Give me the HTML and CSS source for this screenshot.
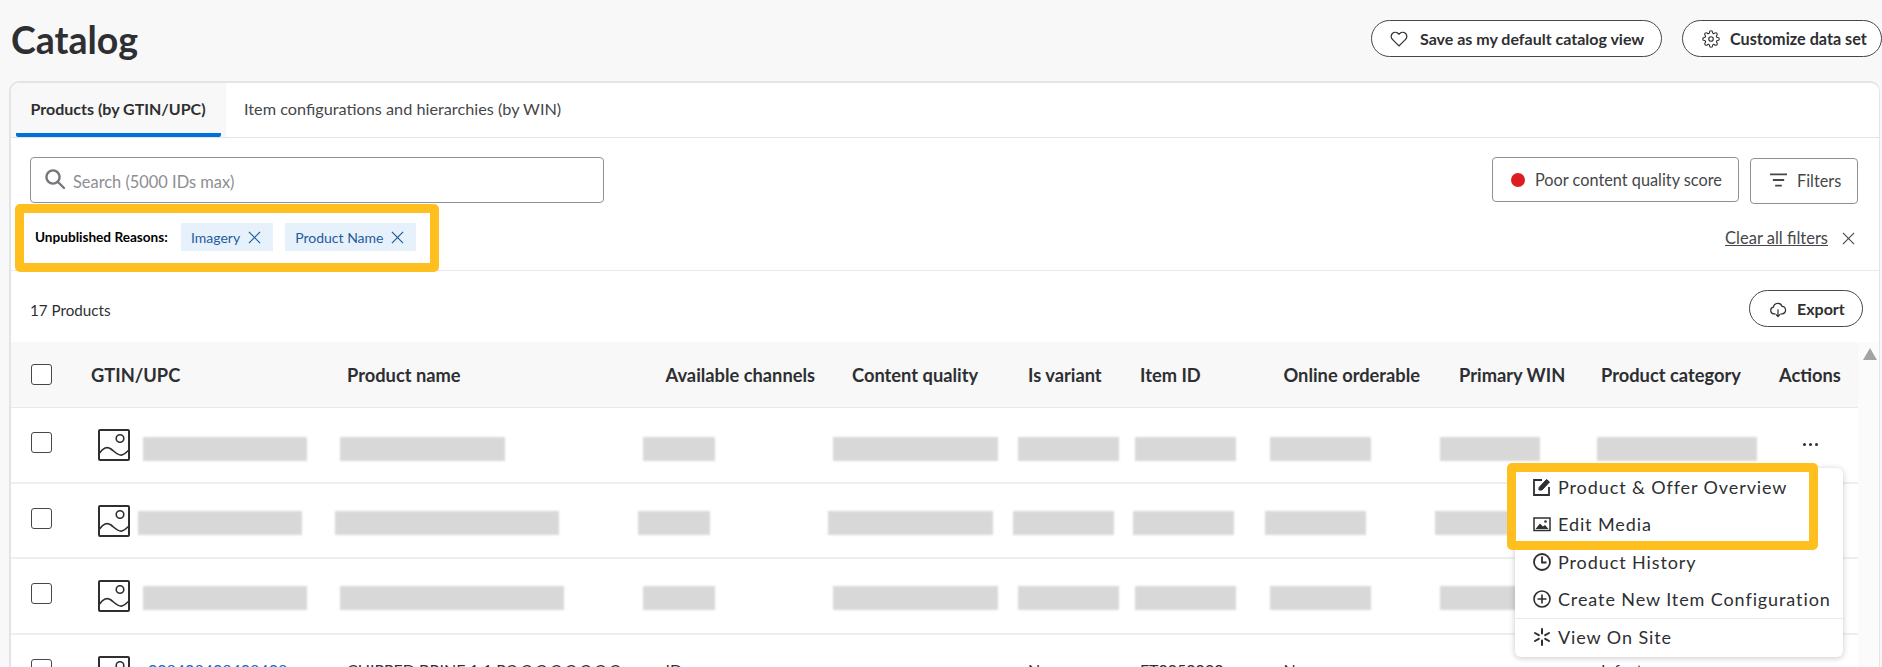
FILE: index.html
```html
<!DOCTYPE html>
<html lang="en">
<head>
<meta charset="utf-8">
<title>Catalog</title>
<link rel="stylesheet" href="styles.css">
</head>
<body>
<header class="topbar">
  <h1 class="title">Catalog</h1>
  <div class="top-actions">
    <button class="pill pill-save">
      <svg class="ic18" viewBox="0 0 24 24" fill="none" stroke="#2e2f32" stroke-width="1.6"><path d="M20.84 4.61a5.5 5.5 0 0 0-7.78 0L12 5.67l-1.06-1.06a5.5 5.5 0 0 0-7.78 7.78l1.06 1.06L12 21.23l7.78-7.78 1.06-1.06a5.5 5.5 0 0 0 0-7.78z"/></svg>
      <span>Save as my default catalog view</span>
    </button>
    <button class="pill pill-custom">
      <svg class="ic18" viewBox="0 0 24 24" fill="none" stroke="#2e2f32" stroke-width="1.5"><circle cx="12" cy="12" r="3"/><path d="M19.4 15a1.65 1.65 0 0 0 .33 1.82l.06.06a2 2 0 0 1 0 2.83 2 2 0 0 1-2.83 0l-.06-.06a1.65 1.65 0 0 0-1.82-.33 1.65 1.65 0 0 0-1 1.51V21a2 2 0 0 1-2 2 2 2 0 0 1-2-2v-.09A1.65 1.65 0 0 0 9 19.4a1.65 1.65 0 0 0-1.82.33l-.06.06a2 2 0 0 1-2.83 0 2 2 0 0 1 0-2.83l.06-.06a1.65 1.65 0 0 0 .33-1.82 1.65 1.65 0 0 0-1.51-1H3a2 2 0 0 1-2-2 2 2 0 0 1 2-2h.09A1.65 1.65 0 0 0 4.6 9a1.65 1.65 0 0 0-.33-1.82l-.06-.06a2 2 0 0 1 0-2.83 2 2 0 0 1 2.83 0l.06.06a1.65 1.65 0 0 0 1.82.33H9a1.65 1.65 0 0 0 1-1.51V3a2 2 0 0 1 2-2 2 2 0 0 1 2 2v.09a1.65 1.65 0 0 0 1 1.51 1.65 1.65 0 0 0 1.82-.33l.06-.06a2 2 0 0 1 2.83 0 2 2 0 0 1 0 2.83l-.06.06a1.65 1.65 0 0 0-.33 1.82V9a1.65 1.65 0 0 0 1.51 1H21a2 2 0 0 1 2 2 2 2 0 0 1-2 2h-.09a1.65 1.65 0 0 0-1.51 1z"/></svg>
      <span>Customize data set</span>
    </button>
  </div>
</header>

<main class="card">
  <nav class="tabs">
    <div class="tab tab-active"><div class="tab-inner">Products (by GTIN/UPC)</div></div>
    <div class="tab tab-plain">Item configurations and hierarchies (by WIN)</div>
  </nav>

  <section class="toolbar">
    <div class="search">
      <svg class="search-ic" viewBox="0 0 20 20" fill="none" stroke="#74767c" stroke-width="2.4" stroke-linecap="round"><circle cx="8" cy="8" r="6.6"/><path d="M13 13l6 6"/></svg>
      <span class="search-ph">Search (5000 IDs max)</span>
    </div>
    <div class="tool-btns">
      <button class="box-btn box-quality"><span class="red-dot"></span><span>Poor content quality score</span></button>
      <button class="box-btn box-filters">
        <svg class="filter-ic" viewBox="0 0 18 14" fill="none" stroke="#46474a" stroke-width="2"><path d="M0 1h18M3 7h12M5.500 13h7"/></svg>
        <span>Filters</span>
      </button>
    </div>
  </section>

  <section class="filter-row">
    <div class="callout callout-filters">
      <span class="filter-label">Unpublished Reasons:</span>
      <span class="chip">Imagery<svg class="chip-x" viewBox="0 0 14 14" fill="none" stroke="#1f5c9c" stroke-width="1.3"><path d="M1 1l12 12M13 1L1 13"/></svg></span>
      <span class="chip">Product Name<svg class="chip-x" viewBox="0 0 14 14" fill="none" stroke="#1f5c9c" stroke-width="1.3"><path d="M1 1l12 12M13 1L1 13"/></svg></span>
    </div>
    <div class="clear-all">
      <a class="clear-link">Clear all filters</a>
      <svg class="clear-x" viewBox="0 0 14 14" fill="none" stroke="#46474a" stroke-width="1.2"><path d="M1 1l12 12M13 1L1 13"/></svg>
    </div>
  </section>

  <section class="count-row">
    <span class="count">17 Products</span>
    <button class="pill pill-export">
      <svg class="ic18" viewBox="0 0 24 24" fill="none" stroke="#2e2f32" stroke-width="1.6" stroke-linecap="round" stroke-linejoin="round"><path d="M8 18.500H6.500a4.500 4.500 0 0 1-.6-8.900 6 6 0 0 1 11.600-1 5 5 0 0 1 .5 9.900H16"/><path d="M12 13v9M9.500 19.500L12 22l2.500-2.500"/></svg>
      <span>Export</span>
    </button>
  </section>

  <section class="table">
    <div class="scroll-strip"><span class="scroll-up"></span></div>
    <div class="thead">
      <div class="cell-check"><span class="check"></span></div>
      <div>GTIN/UPC</div><div>Product name</div><div>Available channels</div><div>Content quality</div><div>Is variant</div><div>Item ID</div><div>Online orderable</div><div>Primary WIN</div><div>Product category</div><div>Actions</div>
    </div>

    <div class="row row-first">
      <div class="cell-check"><span class="check"></span></div>
      <svg class="thumb" viewBox="0 0 32 32" fill="none" stroke="#2e2f32"><rect x="1" y="1" width="30" height="30" rx="1" stroke-width="2"/><circle cx="22" cy="9.500" r="3.800" stroke-width="1.600"/><path d="M1.500 24C5 19 9 17 13 20c4 3 7 7 11 6 3-1 5-3 7-5" stroke-width="1.600"/></svg>
      <span class="bar w164"></span><span class="bar w165"></span><span class="bar w72"></span><span class="bar w165"></span><span class="bar w101"></span><span class="bar w101"></span><span class="bar w101"></span><span class="bar w100"></span><span class="bar w160"></span>
      <span class="dots"><i></i><i></i><i></i></span>
    </div>

    <div class="row">
      <div class="cell-check"><span class="check"></span></div>
      <svg class="thumb" viewBox="0 0 32 32" fill="none" stroke="#2e2f32"><rect x="1" y="1" width="30" height="30" rx="1" stroke-width="2"/><circle cx="22" cy="9.500" r="3.800" stroke-width="1.600"/><path d="M1.500 24C5 19 9 17 13 20c4 3 7 7 11 6 3-1 5-3 7-5" stroke-width="1.600"/></svg>
      <span class="bar w164 shift"></span><span class="bar w224 shift"></span><span class="bar w72 shift"></span><span class="bar w165 shift"></span><span class="bar w101 shift"></span><span class="bar w101 shift-sm"></span><span class="bar w101 shift"></span><span class="bar w100 shift"></span>
    </div>

    <div class="row">
      <div class="cell-check"><span class="check"></span></div>
      <svg class="thumb" viewBox="0 0 32 32" fill="none" stroke="#2e2f32"><rect x="1" y="1" width="30" height="30" rx="1" stroke-width="2"/><circle cx="22" cy="9.500" r="3.800" stroke-width="1.600"/><path d="M1.500 24C5 19 9 17 13 20c4 3 7 7 11 6 3-1 5-3 7-5" stroke-width="1.600"/></svg>
      <span class="bar w164"></span><span class="bar w224"></span><span class="bar w72"></span><span class="bar w165"></span><span class="bar w101"></span><span class="bar w101"></span><span class="bar w101"></span><span class="bar w100"></span>
    </div>

    <div class="row-text">
      <div class="cell-check"><span class="check"></span></div>
      <div class="gtin-cell">
        <svg class="thumb" viewBox="0 0 32 32" fill="none" stroke="#2e2f32"><rect x="1" y="1" width="30" height="30" rx="1" stroke-width="2"/><circle cx="22" cy="9.500" r="3.800" stroke-width="1.600"/></svg>
        <span class="gtin">008408408408408</span>
      </div>
      <div>CHIPPED BRINE 1 1 PC C C C C C C C</div><div>ID</div><div></div><div>No</div><div>FT0050000</div><div>No</div><div></div><div>Infant</div>
    </div>

    <div class="menu">
      <div class="menu-item">
        <svg class="menu-ic" viewBox="0 0 18 18" fill="none" stroke="#2e2f32" stroke-width="1.800"><path d="M9 2H1v15h15V9"/><path d="M6 9.500L13.500 1.500 16.500 4 9 12H6z" fill="#2e2f32" stroke-width="1"/></svg>
        <span>Product &amp; Offer Overview</span>
      </div>
      <div class="menu-item">
        <svg class="menu-ic" viewBox="0 0 18 18" fill="none" stroke="#2e2f32" stroke-width="1.500"><rect x="1" y="3" width="16" height="12.500"/><circle cx="12.500" cy="6.500" r="1.300" fill="#2e2f32" stroke="none"/><path d="M2.500 14L7 8.500l3 3 2-1.500 3.500 4z" fill="#2e2f32" stroke="none"/></svg>
        <span>Edit Media</span>
      </div>
      <div class="menu-item">
        <svg class="menu-ic" viewBox="0 0 18 18" fill="none" stroke="#2e2f32" stroke-width="1.800"><circle cx="9" cy="9" r="8"/><path d="M9 3.500V9.500H13.500"/></svg>
        <span>Product History</span>
      </div>
      <div class="menu-item">
        <svg class="menu-ic" viewBox="0 0 18 18" fill="none" stroke="#2e2f32" stroke-width="1.600"><circle cx="9" cy="9" r="8"/><path d="M9 4.500v9M4.500 9h9"/></svg>
        <span>Create New Item Configuration</span>
      </div>
      <div class="menu-item menu-item-last">
        <svg class="menu-ic" viewBox="0 0 18 18" fill="none" stroke="#2e2f32" stroke-width="2" stroke-linecap="round"><path d="M9 1v4.500M9 12.500V17M2 5l3.800 2.200M12.200 10.800L16 13M2 13l3.800-2.200M12.200 7.200L16 5"/></svg>
        <span>View On Site</span>
      </div>
    </div>
    <div class="callout-menu"></div>
  </section>
</main>
</body>
</html>
```

FILE: styles.css
```css
* { box-sizing: border-box; }
html, body { margin: 0; height: 667px; overflow: hidden; }
body { background: #f8f8f8; color: #2e2f32; font-family: Lato, "Liberation Sans", sans-serif; }
button { font-family: inherit; color: inherit; cursor: pointer; }
svg { display: block; flex: none; }

.topbar { height: 81px; display: flex; justify-content: space-between; align-items: flex-start; padding: 20px 0 0 11px; }
.title { margin: 0; font-size: 37.500px; line-height: 40px; font-weight: 700; color: #2e2f32; letter-spacing: 0; }
.top-actions { display: flex; gap: 20px; }
.pill { height: 37px; border: 1.5px solid #46474a; border-radius: 19px; background: #fff; font-size: 16px; font-weight: 700; display: flex; align-items: center; padding: 0; white-space: nowrap; }
.ic18 { width: 18px; height: 18px; }
.pill-save { width: 291px; padding-left: 18px; gap: 12px; }
.pill-custom { width: 200px; padding-left: 19px; gap: 10px; font-size: 16.200px; }
.pill-export { width: 114px; padding-left: 19px; gap: 10px; }

.card { margin-left: 9px; width: 1871px; height: 586px; background: #fff; border: 2px solid #e3e4e5; border-bottom: 0; border-right-width: 1px; border-radius: 10px 10px 0 0; overflow: hidden; }
.tabs { display: flex; height: 55px; border-bottom: 1px solid #e3e4e5; }
.tab { font-size: 16px; height: 54px; white-space: nowrap; }
.tab-active { width: 215px; padding: 0 5px 0 4.500px; background: #f8f8f8; border-top-left-radius: 9px; font-weight: 700; }
.tab-inner { height: 54px; padding: 16px 0 0 15px; line-height: 20px; border-bottom: 4px solid #0071dc; border-radius: 0 0 2px 2px; }
.tab-plain { padding: 16px 0 0 18px; line-height: 20px; color: #46474a; font-size: 16.250px; }

.toolbar { height: 66px; padding: 19px 21px 0 19px; display: flex; justify-content: space-between; align-items: flex-start; }
.search { width: 574px; height: 46px; border: 1px solid #909196; border-radius: 4px; display: flex; align-items: center; padding: 2px 0 0 14px; gap: 8px; background: #fff; }
.search-ic { width: 20px; height: 20px; margin-top: -4px; }
.search-ph { font-size: 16.400px; color: #8d8e92; }
.tool-btns { display: flex; gap: 11px; align-items: flex-start; }
.box-btn { background: #fff; border: 1px solid #909196; border-radius: 4px; display: flex; align-items: center; font-size: 16.300px; color: #46474a; padding: 0; white-space: nowrap; }
.box-quality { width: 247px; height: 45px; padding-left: 18px; gap: 10px; }
.box-filters { width: 108px; height: 46px; margin-top: 1px; padding: 0 0 2px 19px; gap: 10px; }
.red-dot { width: 14px; height: 14px; border-radius: 50%; background: #de1c24; }
.filter-ic { width: 17px; height: 14px; }

.filter-row { height: 67px; border-bottom: 1px solid #e8e9ea; padding: 0 24px 0 4px; display: flex; justify-content: space-between; align-items: flex-start; }
.callout { border: 9px solid #ffc01f; border-radius: 5px; background: #fff; }
.callout-filters { width: 424px; height: 68px; display: flex; align-items: center; padding: 0 0 2px 11px; }
.filter-label { font-size: 13.600px; font-weight: 700; color: #000; width: 146px; white-space: nowrap; }
.chip { height: 28px; padding: 0 12px 0 10px; margin-right: 12px; background: #e6f1fc; color: #1f5c9c; font-size: 14px; display: flex; align-items: center; gap: 8px; white-space: nowrap; }
.chip-x { width: 13px; height: 13px; }
.clear-all { display: flex; align-items: center; gap: 14px; margin-top: 25px; }
.clear-link { font-size: 16.500px; line-height: 18px; color: #46474a; text-decoration: underline; }
.clear-x { width: 13px; height: 13px; }

.count-row { height: 71px; padding: 19px 16px 0 19px; display: flex; justify-content: space-between; align-items: flex-start; }
.count { font-size: 15.200px; line-height: 20px; margin-top: 10px; color: #2e2f32; }

.table { position: relative; }
.thead { height: 66px; width: 1848px; background: #f8f8f8; border-bottom: 1px solid #e8e9ea; display: grid; align-items: center; grid-template-columns: 80px 256px 318.500px 186.500px 176px 112px 143.500px 175.500px 142px 178px 80px; font-size: 18.300px; font-weight: 700; color: #2e2f32; white-space: nowrap; }
.cell-check { padding-left: 20px; }
.check { display: block; width: 21px; height: 21px; border: 1.500px solid #46474a; border-radius: 3px; background: #fff; }
.scroll-strip { position: absolute; top: 0; right: 0; width: 21px; height: 400px; background: #fbfbfb; }
.scroll-up { position: absolute; top: 6px; left: 5px; width: 0; height: 0; border: 7.500px solid transparent; border-top: 0; border-bottom: 12px solid #a3a3a3; }

.row { height: 75.670px; width: 1848px; border-bottom: 2px solid #eeeeee; display: grid; align-items: start; grid-template-columns: 87px 45px 197px 303px 190px 185px 117px 135px 170px 157px 206px 56px; }
.row .cell-check { margin-top: 24px; }
.thumb { width: 32px; height: 32px; margin-top: 21px; }
.bar { display: block; height: 24px; margin-top: 27px; background: #d8d8d8; filter: blur(1px); }
.row-first .bar { margin-top: 29px; }
.shift { margin-left: -5px; }
.shift-sm { margin-left: -2px; }
.w72 { width: 72px; } .w100 { width: 100px; } .w101 { width: 101px; } .w160 { width: 160px; } .w164 { width: 164px; } .w165 { width: 165px; } .w224 { width: 224px; }
.dots { display: flex; gap: 3px; margin-top: 35px; }
.dots i { display: block; width: 3px; height: 3px; border-radius: 50%; background: #2e2f32; }

.row-text { width: 1848px; height: 60px; display: grid; grid-template-columns: 80px 256px 318.500px 186.500px 176px 112px 143.500px 175.500px 142px 178px 80px; align-items: start; font-size: 16px; line-height: 20px; white-space: nowrap; }
.row-text > div:not(.cell-check):not(.gtin-cell) { margin-top: 25px; }
.row-text .cell-check { margin-top: 24px; }
.gtin-cell { display: flex; gap: 18px; padding-left: 7px; align-items: flex-start; }
.gtin { color: #0071dc; margin-top: 25px; }

.menu { position: absolute; top: 126px; left: 1504px; width: 328px; height: 189px; background: #fff; border-radius: 6px; box-shadow: 0 1px 6px rgba(0,0,0,.22); }
.menu-item { height: 37.500px; display: flex; align-items: center; padding-left: 18px; gap: 7px; font-size: 18px; letter-spacing: 0.900px; color: #2e2f32; white-space: nowrap; }
.menu-item-last { border-top: 1px solid #e8e9ea; }
.menu-ic { width: 18px; height: 18px; }
.callout-menu { position: absolute; top: 121px; left: 1496px; width: 311px; height: 87px; border: 9px solid #ffc01f; border-radius: 5px; }
```
